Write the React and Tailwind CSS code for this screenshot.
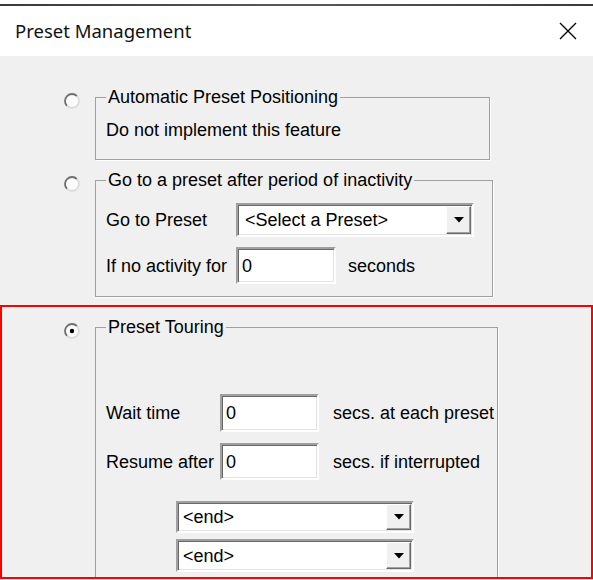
import React from 'react';

const sunken =
  'border-2 border-solid [border-color:#a0a0a0_#ffffff_#ffffff_#a0a0a0] shadow-[inset_1px_1px_0_#696969,inset_-1px_-1px_0_#e3e3e3] bg-white';

const Radio = ({ checked }) => (
  <svg width="16" height="16" viewBox="0 0 16 16" className="mt-[5px] shrink-0">
    <circle cx="8" cy="8" r="6.5" fill="#fbfbfb" />
    <path d="M3.05 12.95 A7 7 0 0 1 12.95 3.05" fill="none" stroke="#6e6e6e" strokeWidth="1.8" />
    <path d="M12.95 3.05 A7 7 0 0 1 3.05 12.95" fill="none" stroke="#dcdcdc" strokeWidth="1.8" />
    {checked && <circle cx="8" cy="8" r="2.2" fill="#000" />}
  </svg>
);

const TextBox = ({ width, height, value }) => (
  <div className={`${sunken} flex items-center pl-[4px] leading-[18px]`} style={{ width, height }}>
    {value}
  </div>
);

const Combo = ({ width, height, value, padLeft }) => (
  <div className={`${sunken} flex items-center p-[1px]`} style={{ width, height }}>
    <div className="flex-1 leading-[18px]" style={{ paddingLeft: padLeft }}>{value}</div>
    <div className="h-full w-[25px] flex items-center justify-center bg-[#f0f0f0] border border-solid [border-color:#ffffff_#696969_#696969_#ffffff] shadow-[inset_-1px_-1px_0_#a0a0a0]">
      <svg width="10" height="6" viewBox="0 0 10 6">
        <polygon points="0,0 10,0 5,5.5" fill="#000" />
      </svg>
    </div>
  </div>
);

const Group = ({ title, width, className, children }) => (
  <fieldset
    className={`border border-solid border-[#a0a0a0] shadow-[1px_1px_0_#ffffff] pl-[10px] ${className}`}
    style={{ width }}
  >
    <legend className="px-[2px] leading-[18px]">{title}</legend>
    {children}
  </fieldset>
);

export default function App() {
  return (
    <div className="w-[593px] h-[580px] overflow-hidden bg-white font-['Liberation_Sans',Arial,sans-serif] text-[18px] text-black">
      {/* window frame line */}
      <div className="mt-[4px] h-[2px] bg-gradient-to-r from-[#3a3a3a] via-[#5a5a5a] to-[#3a3a3a]" />

      {/* Title bar */}
      <div className="h-[50px] flex items-center justify-between pl-[15px] pr-[16px]">
        <span className="font-['Noto_Sans','Open_Sans',sans-serif] text-[18.5px] text-[#111]">Preset Management</span>
        <svg width="18" height="18" viewBox="0 0 18 18">
          <path d="M1 1 L17 17 M17 1 L1 17" stroke="#000" strokeWidth="1.3" />
        </svg>
      </div>

      {/* Body */}
      <div className="bg-[#f0f0f0] h-[524px] pt-[32px]">
        <div className="flex pl-[64px] gap-[15px]">
          <Radio />
          <Group title="Automatic Preset Positioning" width={395} className="pt-[15px] pb-[20px]">
            <div className="leading-[18px]">Do not implement this feature</div>
          </Group>
        </div>

        <div className="flex pl-[64px] gap-[15px] mt-[11px]">
          <Radio />
          <Group title="Go to a preset after period of inactivity" width={398} className="pt-[14px] pb-[12px]">
            <div className="flex items-center">
              <div className="w-[130px] leading-[18px]">Go to Preset</div>
              <Combo width={238} height={34} value="<Select a Preset>" padLeft={6} />
            </div>
            <div className="flex items-center mt-[10px]">
              <div className="w-[130px] leading-[18px]">If no activity for</div>
              <TextBox width={100} height={37} value="0" />
              <div className="ml-[12px] leading-[18px]">seconds</div>
            </div>
          </Group>
        </div>

        {/* highlighted section */}
        <div className="mt-[8px] h-[274px] border-2 border-[#ff0000] overflow-hidden pt-[11px]">
          <div className="flex pl-[62px] gap-[15px]">
            <Radio checked />
            <Group title="Preset Touring" width={403} className="pt-[58px] pb-[30px]">
              <div className="flex items-center">
                <div className="w-[114px] leading-[18px]">Wait time</div>
                <TextBox width={99} height={38} value="0" />
                <div className="ml-[14px] leading-[18px]">secs. at each preset</div>
              </div>
              <div className="flex items-center mt-[11px]">
                <div className="w-[114px] leading-[18px]">Resume after</div>
                <TextBox width={99} height={37} value="0" />
                <div className="ml-[14px] leading-[18px]">secs. if interrupted</div>
              </div>
              <div className="ml-[70px] mt-[21px]">
                <Combo width={238} height={32} value="<end>" padLeft={4} />
              </div>
              <div className="ml-[70px] mt-[6px]">
                <Combo width={238} height={33} value="<end>" padLeft={4} />
              </div>
            </Group>
          </div>
        </div>
      </div>
    </div>
  );
}
